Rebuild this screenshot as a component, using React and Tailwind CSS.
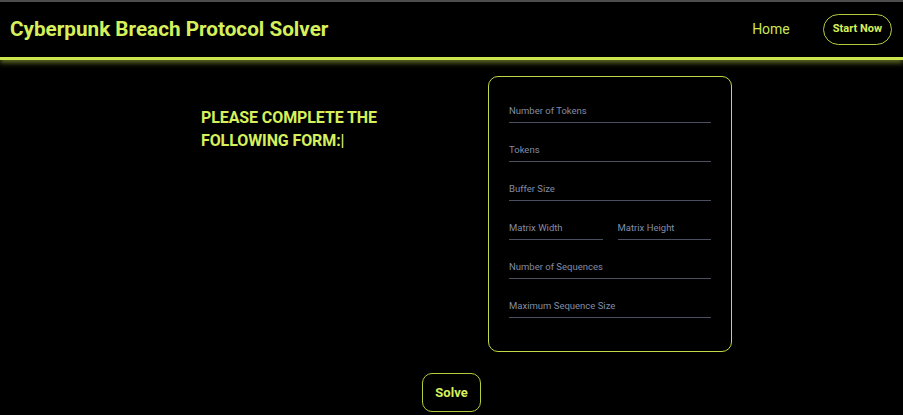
import React, { useState } from 'react';

const fields = [
    { name: 'numTokens', label: 'Number of Tokens' },
    { name: 'tokens', label: 'Tokens' },
    { name: 'bufferSize', label: 'Buffer Size' },
    { name: 'matrix', pair: [{ name: 'matrixWidth', label: 'Matrix Width' }, { name: 'matrixHeight', label: 'Matrix Height' }] },
    { name: 'numSequences', label: 'Number of Sequences' },
    { name: 'maxSequenceSize', label: 'Maximum Sequence Size' },
];

const Field = ({ label, value, onChange }) => (
    <input
        type="text"
        placeholder={label}
        value={value}
        onChange={onChange}
        className="w-full bg-transparent border-b-[1.5px] border-[#4a5060] pb-[5px] pt-0 text-[9.5px] leading-[12px] text-[#8e96ab] placeholder:text-[#838ca6] outline-none"
    />
);

const App = () => {
    const [form, setForm] = useState({});

    const update = (name) => (e) => setForm({ ...form, [name]: e.target.value });

    return (
        <div className="min-h-[415px] h-[415px] bg-black border-t-2 border-[#4d4d4d] overflow-hidden" style={{ fontFamily: 'Roboto, "Liberation Sans", sans-serif' }}>
            <header className="h-[58px] flex items-center justify-between pl-[10px] pr-[11px] border-b-[3px] border-[#cde64d] shadow-[0_3px_5px_rgba(205,230,77,0.45)]">
                <h1 className="text-[20.7px] font-bold text-[#d6f05c]">Cyberpunk Breach Protocol Solver</h1>
                <nav className="flex items-center gap-[33px]">
                    <a href="#" className="text-[14px] text-[#cde655]">Home</a>
                    <button className="h-[31px] px-[9px] rounded-full border-[1.5px] border-[#b5cc3c] text-[11px] font-bold text-[#d6f05c]">Start Now</button>
                </nav>
            </header>

            <main className="flex pl-[201px] pt-[16px]">
                <div className="w-[287px] pt-[30px]">
                    <h2 className="text-[16px] leading-[23px] font-bold uppercase tracking-[-0.1px] text-[#d6f05c]">
                        Please complete the<br />following form:<span className="font-normal text-[#e0f08a]">|</span>
                    </h2>
                </div>
                <form className="w-[244px] h-[276px] rounded-[10px] border-[1.5px] border-[#c2d844] px-[20px] pt-[28px] flex flex-col gap-[21px]">
                    {fields.map((f) =>
                        f.pair ? (
                            <div key={f.name} className="flex gap-[15px]">
                                {f.pair.map((p) => (
                                    <Field key={p.name} label={p.label} value={form[p.name] || ''} onChange={update(p.name)} />
                                ))}
                            </div>
                        ) : (
                            <Field key={f.name} label={f.label} value={form[f.name] || ''} onChange={update(f.name)} />
                        )
                    )}
                </form>
            </main>

            <div className="flex justify-center pt-[21px]">
                <button className="w-[59px] h-[39px] rounded-[10px] border-[1.5px] border-[#b5cc3c] text-[13px] font-bold text-[#d6f05c]">Solve</button>
            </div>
        </div>
    );
};

export default App;
